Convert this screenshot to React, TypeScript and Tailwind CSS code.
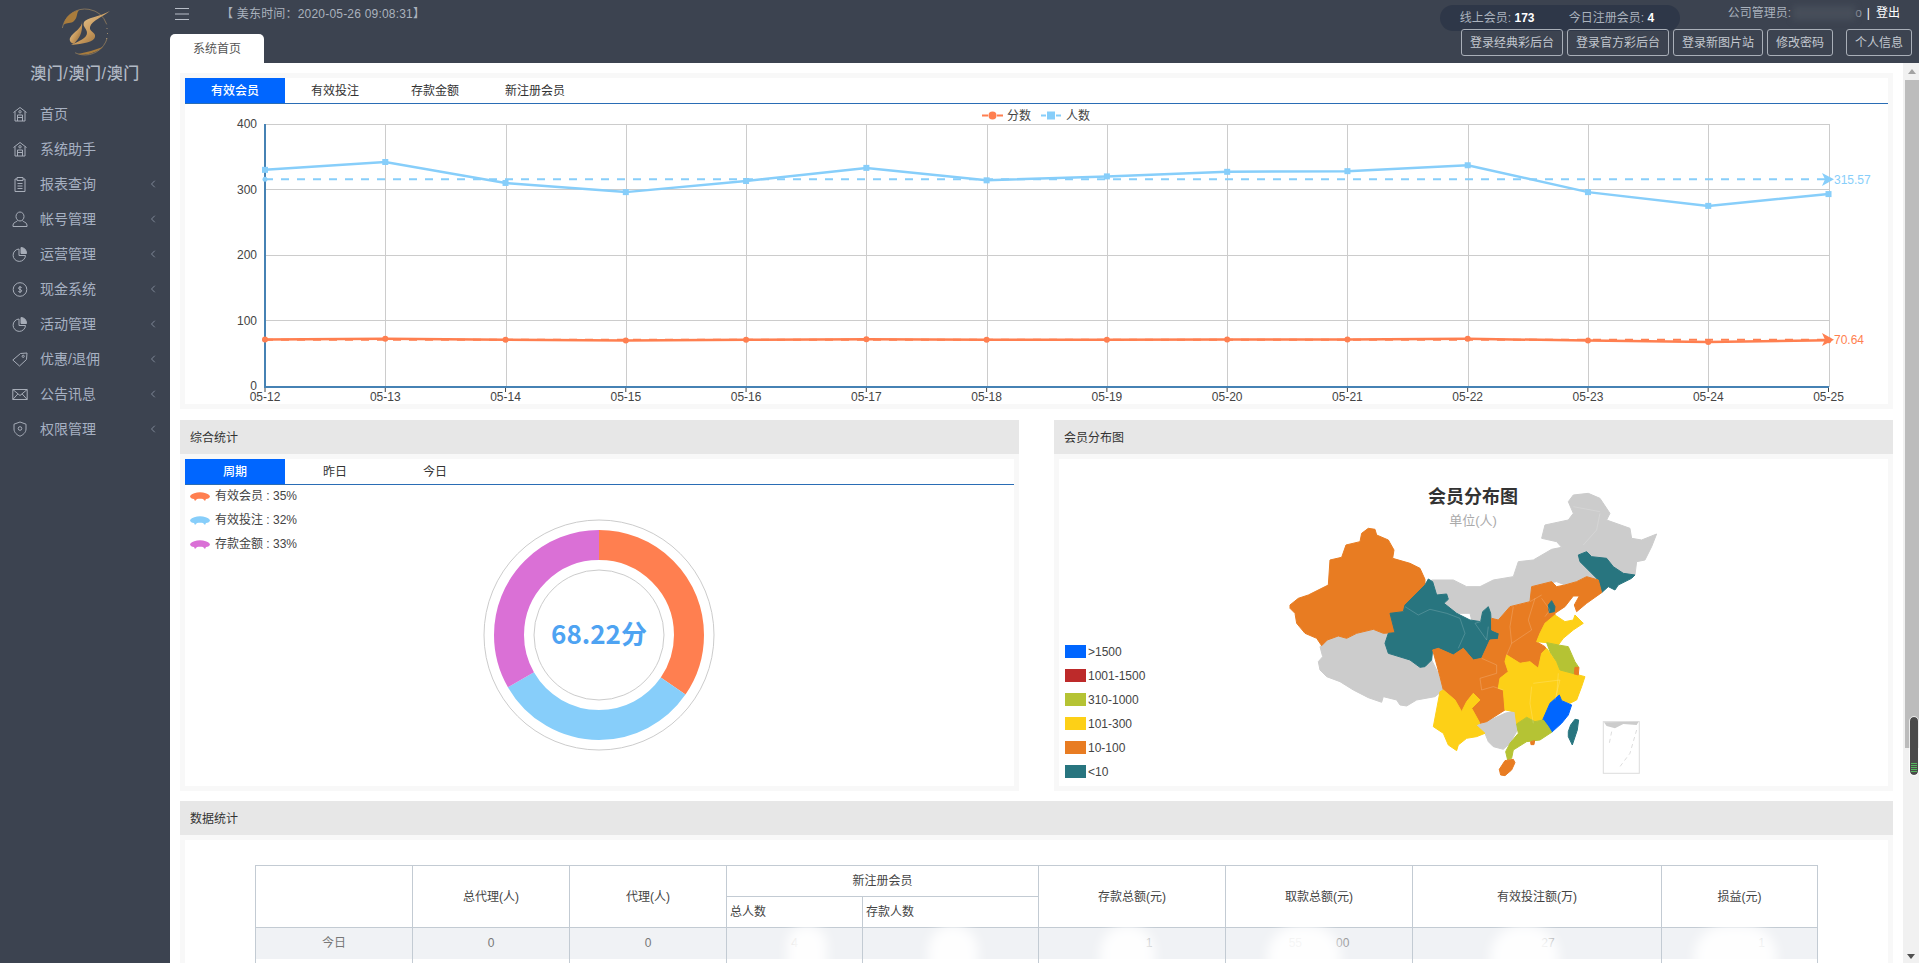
import React from 'react';
import { ChevronLeft } from 'lucide-react';

const navIcons: Record<string, React.ReactNode> = {
  home: (
    <>
      <path d="M1.5 6.5 8 1.5l6.5 5M3 5.5V15h10V5.500" />
      <circle cx="8" cy="5.800" r="1.200" />
      <path d="M5.500 15V9h5v6M5.500 11.500h5" />
    </>
  ),
  report: (
    <>
      <path d="M5 3H3v12.500h10V3h-2" />
      <path d="M5 1.500h6v3H5zM5.500 7.500h5M5.500 10h5M5.500 12.500h5" />
    </>
  ),
  user: (
    <>
      <ellipse cx="8" cy="5.500" rx="4" ry="4.500" />
      <path d="M5.500 9.500C5.500 11 1 11 1 14v1.500h14V14c0-3-4.500-3-4.500-4.500" />
    </>
  ),
  pie: (
    <>
      <path d="M7 3a6.200 6.200 0 1 0 6.500 6.500H7z" />
      <path d="M9 1.500a5.500 5.500 0 0 1 5.500 6H9z" fill="#a7adb8" />
    </>
  ),
  cash: (
    <>
      <circle cx="8" cy="8.500" r="6.800" />
      <path d="M9.700 6.600C9.200 5.800 6.500 5.600 6.500 7.200c0 1.600 3.200 1 3.200 2.600 0 1.600-2.800 1.400-3.400.6M8 5v7" />
    </>
  ),
  tag: (
    <>
      <path d="M.8 9 8.500 2.500l6.500-.5-.5 6.500L7.500 15z" />
      <circle cx="11.200" cy="5.300" r="1.100" />
    </>
  ),
  mail: <path d="M.8 3.500h14.400v10H.8zM.8 3.500 8 9.500l7.200-6M.8 13.500l5-5.500M15.200 13.500l-5-5.500" />,
  shield: (
    <>
      <path d="M8 1 14 3.200V8c0 3.500-3 6-6 7.200C5 14 2 11.500 2 8V3.200z" />
      <circle cx="8" cy="7.500" r="1.800" />
    </>
  ),
};

const navItems = [
  { label: '首页', icon: 'home' },
  { label: '系统助手', icon: 'home' },
  { label: '报表查询', icon: 'report', arrow: true },
  { label: '帐号管理', icon: 'user', arrow: true },
  { label: '运营管理', icon: 'pie', arrow: true },
  { label: '现金系统', icon: 'cash', arrow: true },
  { label: '活动管理', icon: 'pie', arrow: true },
  { label: '优惠/退佣', icon: 'tag', arrow: true },
  { label: '公告讯息', icon: 'mail', arrow: true },
  { label: '权限管理', icon: 'shield', arrow: true },
];

const Logo = () => (
  <svg viewBox="60 5 60 54" className="w-[60px] h-[54px]">
    <defs>
      <linearGradient id="gold" x1="0" y1="0" x2="1" y2="1">
        <stop offset="0" stopColor="#f0d6a8" />
        <stop offset="0.55" stopColor="#c99a5c" />
        <stop offset="1" stopColor="#7c5a30" />
      </linearGradient>
    </defs>
    <circle cx="90" cy="32" r="23" fill="none" stroke="#8d7a5c" strokeWidth="0.8" strokeDasharray="60 14 40 30" transform="rotate(-170 90 32)" />
    <path d="M68.500 25C70 17 76 12 84 10c-3 4-1 7-5 11-3 3-7 1-10.500 4z" fill="#a97c3c" />
    <path d="M115 11c-7 6-18 9-20 16-1 5 6 5 5 10-1 5-12 7-24 8 8-4 16-7 16-12 0-5-5-6-3-11 2-4 15-5 26-11z" fill="url(#gold)" />
    <path d="M87 21c1 7-9 11-12 17-1 3 1 5 4 6 5-6 9-10 8-23z" fill="url(#gold)" />
    <path d="M83 54c9 2 19-2 25-7-8 3-16 5-25 7z" fill="#a97c3c" />
    <path d="M112 28v1M112.500 33v1M111.500 38v1" stroke="#9a8a70" strokeWidth="1" />
  </svg>
);

const Sidebar = () => (
  <aside className="w-[170px] shrink-0 bg-[#3c4350] text-[#a7b1c2]">
    <div className="flex flex-col items-center pt-[5px] h-[96px]">
      <Logo />
      <div className="mt-[3px] text-base leading-6 font-medium tracking-[0.6px] text-[#b1b9c5]">澳门/澳门/澳门</div>
    </div>
    <nav>
      {navItems.map((item) => (
        <div key={item.label} className="flex items-center h-[35px] pl-[12px] pr-[11px] text-sm">
          <svg viewBox="0 0 16 16" fill="none" stroke="#a7adb8" strokeWidth="1" className="w-4 h-4">
            {navIcons[item.icon]}
          </svg>
          <span className="ml-3 flex-1">{item.label}</span>
          {item.arrow && <ChevronLeft className="w-[12px] h-[12px]" strokeWidth={1.25} />}
        </div>
      ))}
    </nav>
  </aside>
);

const Header = () => (
  <header className="h-[63px] shrink-0 flex justify-between bg-[#3c4350]">
    <div className="flex flex-col">
      <div className="h-[34px] flex items-start pt-[8px] pl-[5px]">
        <svg viewBox="0 0 14 12" stroke="#b8bec8" strokeWidth="1" className="w-[14px] h-[12px]">
          <path d="M0 .5h14M0 6h14M0 11.500h14" />
        </svg>
        <span className="ml-[32px] -mt-[1px] text-xs leading-[15px] tracking-[0.2px] text-[#aab2bd]">【 美东时间：2020-05-26 09:08:31】</span>
      </div>
      <div className="w-[94px] h-[29px] bg-white rounded-t-[5px] flex items-center justify-center text-xs text-[#555]">系统首页</div>
    </div>
    <div className="flex flex-col items-end pr-[7px]">
      <div className="h-[29px] flex pr-[12px] text-xs text-[#aab2bd]">
        <div className="mt-[5px] h-[26px] w-[240px] rounded-full bg-[#2e3748] flex items-center pl-[20px]">
          <span className="w-[109px]">线上会员: <b className="text-white font-semibold">173</b></span>
          <span>今日注册会员: <b className="text-white font-semibold">4</b></span>
        </div>
        <div className="ml-[48px] mt-[5px] h-[16px] flex items-center leading-[16px]">
          <span>公司管理员:</span>
          <span className="w-[62px] h-[14px] ml-[2px] bg-[#474e5a] blur-[3px]" />
          <span className="text-[#8f97a3]">o</span>
          <span className="ml-[5px] text-white">|</span>
          <span className="ml-[6px] text-white">登出</span>
        </div>
      </div>
      <div className="h-[27px] flex text-xs text-[#c3c8cf]">
        {['登录经典彩后台', '登录官方彩后台'].map((b) => (
          <div key={b} className="w-[102px] mr-[4px] border border-[#a9afb8] rounded-[3px] flex items-center justify-center">{b}</div>
        ))}
        <div className="w-[90px] mr-[4px] border border-[#a9afb8] rounded-[3px] flex items-center justify-center">登录新图片站</div>
        <div className="w-[66px] mr-[13px] border border-[#a9afb8] rounded-[3px] flex items-center justify-center">修改密码</div>
        <div className="w-[66px] border border-[#a9afb8] rounded-[3px] flex items-center justify-center">个人信息</div>
      </div>
    </div>
  </header>
);

const Tabs = ({ items }: { items: string[] }) => (
  <div className="flex h-[26px] border-b border-[#2a6db5] text-xs text-[#333]">
    {items.map((t, i) => (
      <div
        key={t}
        className={i === 0 ? 'w-[100px] h-[25px] flex items-center justify-center bg-[#0066ff] text-white font-medium' : 'w-[100px] h-[25px] flex items-center justify-center'}
      >
        {t}
      </div>
    ))}
  </div>
);

const members = [330, 342, 310, 296, 313, 333, 314, 320, 327, 328, 337, 296, 275, 293];
const scores = [71, 72, 70.5, 69.5, 70.5, 71.5, 70.5, 70.5, 71, 71, 72, 69.5, 67, 70];
const dates = ['05-12', '05-13', '05-14', '05-15', '05-16', '05-17', '05-18', '05-19', '05-20', '05-21', '05-22', '05-23', '05-24', '05-25'];
const px = (i: number) => 265 + i * 120.27;
const py = (v: number) => 386 - v * 0.655;
const toLine = (vals: number[]) => vals.map((v, i) => `${px(i)},${py(v)}`).join(' ');

const LineChart = () => (
  <svg viewBox="185 104 1703 299" className="block w-[1703px] h-[299px] overflow-visible">
    <g stroke="#cccccc" strokeWidth="1">
      {dates.map((d, i) => i > 0 && <line key={d} x1={Math.round(px(i)) + 0.5} x2={Math.round(px(i)) + 0.5} y1="124" y2="387" />)}
      {[100, 200, 300, 400].map((v) => <line key={v} x1="265" x2="1829" y1={Math.floor(py(v)) + 0.5} y2={Math.floor(py(v)) + 0.5} />)}
    </g>
    <line x1="265" x2="265" y1="124" y2="388" stroke="#4682b4" strokeWidth="2" />
    <line x1="264" x2="1829" y1="387" y2="387" stroke="#4682b4" strokeWidth="2" />
    <g fill="#444" fontSize="12">
      {[0, 100, 200, 300, 400].map((v) => <text key={v} x="257" y={py(v) + 4} textAnchor="end">{v}</text>)}
      {dates.map((d, i) => (
        <g key={d}>
          <line x1={px(i)} x2={px(i)} y1="388" y2="392" stroke="#444" />
          <text x={px(i)} y="401" textAnchor="middle">{d}</text>
        </g>
      ))}
    </g>
    <line x1="265" x2="1826" y1={py(315.57)} y2={py(315.57)} stroke="#87cefa" strokeWidth="2" strokeDasharray="8 8" />
    <line x1="265" x2="1826" y1={py(70.64)} y2={py(70.64)} stroke="#ff7f50" strokeWidth="2" strokeDasharray="8 8" />
    <circle cx="265" cy={py(315.57)} r="2.500" fill="#87cefa" />
    <circle cx="265" cy={py(70.64)} r="2.500" fill="#ff7f50" />
    <polyline points={toLine(members)} fill="none" stroke="#87cefa" strokeWidth="2.500" />
    <polyline points={toLine(scores)} fill="none" stroke="#ff7f50" strokeWidth="2.500" />
    {members.map((v, i) => <rect key={i} x={px(i) - 3} y={py(v) - 3} width="6" height="6" fill="#87cefa" />)}
    {scores.map((v, i) => <circle key={i} cx={px(i)} cy={py(v)} r="3" fill="#ff7f50" />)}
    <polygon points="1822,173 1834,179.300 1822,186 1825,179.300" fill="#87cefa" />
    <polygon points="1822,333 1834,339.700 1822,346 1825,339.700" fill="#ff7f50" />
    <text x="1834" y="183.500" fontSize="12" fill="#87cefa">315.57</text>
    <text x="1834" y="344" fontSize="12" fill="#ff7f50">70.64</text>
    <g fontSize="12" fill="#444">
      <path d="M982 115.500h6M997 115.500h6" stroke="#ff7f50" strokeWidth="2" />
      <circle cx="992.500" cy="115.500" r="4" fill="#ff7f50" />
      <text x="1007" y="119.500">分数</text>
      <path d="M1041 115.500h5M1056 115.500h5" stroke="#87cefa" strokeWidth="2" />
      <rect x="1047" y="111.500" width="8" height="8" fill="#87cefa" />
      <text x="1066" y="119.500">人数</text>
    </g>
  </svg>
);

const fan = 'M0 5C4 0 16 0 20 5C20 7 18 8 16 8L15 10L13 8C11 7.500 9 7.500 7 8L5 10L4 8C2 8 0 7 0 5Z';
const donut = [
  { label: '有效会员 : 35%', color: '#ff7f50', from: 0, size: 34.6 },
  { label: '有效投注 : 32%', color: '#87cefa', from: 34.6, size: 32.1 },
  { label: '存款金额 : 33%', color: '#da70d6', from: 66.7, size: 33.3 },
];

const DonutChart = () => (
  <svg viewBox="185 485 829 301" className="block w-[829px] h-[301px]">
    {donut.map((d, i) => (
      <g key={d.label}>
        <path d={fan} fill={d.color} transform={`translate(190 ${491 + i * 24})`} />
        <text x="215" y={500 + i * 24} fontSize="12" fill="#444">{d.label}</text>
        <circle
          cx="599"
          cy="635"
          r="90"
          fill="none"
          stroke={d.color}
          strokeWidth="30"
          pathLength="100"
          strokeDasharray={`${d.size} ${100 - d.size}`}
          strokeDashoffset={-d.from}
          transform="rotate(-90 599 635)"
        />
      </g>
    ))}
    <circle cx="599" cy="635" r="115" fill="none" stroke="#cccccc" />
    <circle cx="599" cy="635" r="65" fill="none" stroke="#cccccc" />
    <text x="599" y="644" fontSize="26" fontWeight="700" fill="#4ea3f2" textAnchor="middle" className="font-['Noto_Sans_CJK_SC',sans-serif]">68.22分</text>
  </svg>
);

const ORANGE = '#e87c22';
const TEAL = '#28757f';
const YELLOW = '#fdd017';
const GREEN = '#b5c334';
const GRAY = '#cccccc';
const BLUE = '#0066ff';

const regions: { fill: string; points: string }[] = [
  { fill: GRAY, points: '575,330 640,330 680,350 720,350 760,330 820,320 835,275 880,270 935,238 965,232 950,215 905,205 915,165 985,150 1000,130 985,95 1000,75 1045,70 1080,85 1110,130 1100,150 1170,175 1175,205 1205,210 1250,192 1235,230 1215,270 1190,275 1185,315 1085,345 1040,320 1010,335 975,345 950,335 875,350 870,395 810,410 775,450 755,445 745,410 728,425 722,455 695,450 690,430 650,430 612,400 625,388 620,372 590,375' },
  { fill: GRAY, points: '240,530 262,510 295,498 320,505 350,490 400,478 430,490 445,490 435,520 445,550 510,570 540,592 555,590 575,570 600,620 610,660 585,680 530,690 500,708 480,705 470,690 430,680 425,697 385,683 340,660 300,635 260,620 240,600 235,575 248,560' },
  { fill: GRAY, points: '708,765 740,755 795,730 825,722 838,770 810,820 790,838 760,830 745,815 735,790' },
  { fill: ORANGE, points: '150,405 175,385 205,375 265,345 270,270 305,262 318,225 360,215 365,190 385,175 405,178 410,195 445,210 462,240 458,265 510,280 540,295 555,328 555,345 495,405 490,425 450,430 465,488 430,490 400,478 350,490 320,505 295,498 262,510 245,527 230,505 195,490 170,460 165,430 150,415' },
  { fill: TEAL, points: '555,345 565,327 578,335 590,375 620,372 625,388 612,400 650,430 690,450 722,455 728,425 745,410 752,430 755,480 778,490 775,508 750,510 725,565 700,570 670,535 640,555 595,535 578,540 575,570 555,590 540,592 510,570 445,550 435,520 445,490 465,488 450,430 490,425 495,405' },
  { fill: TEAL, points: '1015,255 1040,245 1055,260 1100,265 1120,290 1150,310 1185,315 1175,325 1135,345 1125,360 1105,350 1085,368 1075,330 1040,295 1020,275' },
  { fill: ORANGE, points: '875,350 935,335 950,350 975,345 1010,335 1040,320 1075,330 1085,368 1040,400 1010,425 1003,405 1018,378 1000,378 975,410 945,430 945,440 915,460 900,490 890,515 915,530 920,540 905,550 895,595 870,575 840,580 800,555 795,575 805,605 780,625 775,655 790,660 795,720 740,755 720,760 695,715 720,690 700,670 680,695 665,725 645,690 610,660 600,620 578,540 595,535 640,555 670,535 700,570 725,565 750,510 775,508 778,490 755,480 755,445 775,450 810,410 870,395' },
  { fill: TEAL, points: '925,405 935,392 945,410 943,425 928,428' },
  { fill: YELLOW, points: '600,665 610,660 645,690 665,725 680,695 700,670 720,690 695,715 720,760 708,765 735,790 710,800 680,805 655,825 650,842 625,825 610,790 580,770' },
  { fill: YELLOW, points: '900,490 915,460 945,435 975,455 1000,450 1005,435 1030,460 1000,480 970,505 955,525 920,518 890,515' },
  { fill: YELLOW, points: '800,555 840,580 870,575 895,595 905,550 920,535 950,575 960,600 1005,612 1035,620 1025,650 1010,690 990,700 960,690 935,695 910,750 885,755 860,742 830,762 825,725 795,720 790,660 775,655 780,625 805,605 795,575' },
  { fill: GREEN, points: '920,518 955,525 985,530 1005,575 1015,590 1005,612 960,600 950,575 930,545' },
  { fill: ORANGE, points: '1005,592 1017,592 1015,615 1003,612' },
  { fill: BLUE, points: '958,675 965,692 995,705 985,735 965,760 935,787 925,770 908,750 930,700' },
  { fill: TEAL, points: '1005,748 1016,750 1012,780 997,825 985,800 985,785 992,765' },
  { fill: GREEN, points: '860,742 885,755 910,750 925,770 935,787 900,810 860,815 820,840 815,865 803,870 797,845 810,820 835,790 830,762' },
  { fill: ORANGE, points: '795,872 820,868 825,878 815,900 795,917 782,915 778,898' },
  { fill: ORANGE, points: '872,815 884,812 882,824 873,824' },
];

const borders = [
  'M495 410 535 435 570 418 620 430 660 445 675 490 655 535',
  'M722 455 705 460 740 510M745 470 740 510',
  'M820 410 810 470 815 520 800 555',
  'M885 385 865 450 875 480 815 520',
  'M905 385 930 420 915 440M870 395 905 375',
  'M725 565 770 585 770 610 720 625 725 660 760 650 790 660',
  'M875 650 870 700 880 760M955 610 950 680M880 640 960 630 945 690',
  'M1080 130 1070 180 1030 225',
  'M1000 110 1080 125',
];

const legend = [
  { label: '>1500', color: BLUE },
  { label: '1001-1500', color: '#bd2a2a' },
  { label: '310-1000', color: GREEN },
  { label: '101-300', color: YELLOW },
  { label: '10-100', color: ORANGE },
  { label: '<10', color: TEAL },
];

const MapChart = () => (
  <svg viewBox="1059 459 829 327" className="block w-[829px] h-[327px]">
    <text x="1473" y="503" fontSize="18" fontWeight="700" fill="#333" textAnchor="middle">会员分布图</text>
    <text x="1473" y="525" fontSize="13" fill="#aaa" textAnchor="middle">单位(人)</text>
    <g transform="translate(1240 470) scale(0.3333)">
      {regions.map((r, i) => <polygon key={i} points={r.points} fill={r.fill} stroke={r.fill} strokeWidth="3" strokeLinejoin="round" />)}
      {borders.map((d, i) => <path key={i} d={d} fill="none" stroke="#ffffff" strokeOpacity="0.35" strokeWidth="1.500" />)}
      <rect x="1090" y="755" width="108" height="155" fill="none" stroke="#dcdcdc" strokeWidth="3" />
      <polygon points="1092,757 1196,755 1190,765 1150,762 1125,775 1100,768" fill={GRAY} />
      <path d="M1115 785 1108 820M1190 780 1170 850 1140 890" fill="none" stroke="#dddddd" strokeWidth="3" strokeDasharray="12 10" />
    </g>
    {legend.map((l, i) => (
      <g key={l.label}>
        <rect x="1065" y={645 + i * 24} width="21" height="13" fill={l.color} />
        <text x="1088" y={656 + i * 24} fontSize="12" fill="#444">{l.label}</text>
      </g>
    ))}
  </svg>
);

const PanelHeader = ({ title }: { title: string }) => (
  <div className="h-[34px] bg-[#e7e7e7] flex items-center pl-[10px] pt-[1px] text-xs text-[#333]">{title}</div>
);

const cellBorder = 'border border-[#c3cbd3] font-normal';
const rowCell = 'border-x border-t border-[#c3cbd3] font-normal';

const blobs = [
  { left: 'left-[532px]', width: 'w-[40px]' },
  { left: 'left-[673px]', width: 'w-[50px]' },
  { left: 'left-[845px]', width: 'w-[55px]' },
  { left: 'left-[1012px]', width: 'w-[74px]' },
  { left: 'left-[1235px]', width: 'w-[69px]' },
  { left: 'left-[1439px]', width: 'w-[83px]' },
];

const StatsTable = () => (
  <div className="relative">
    <table className="w-[1562px] table-fixed border-collapse text-xs text-[#444]">
      <colgroup>
        <col className="w-[157px]" />
        <col className="w-[157px]" />
        <col className="w-[157px]" />
        <col className="w-[136px]" />
        <col className="w-[176px]" />
        <col className="w-[187px]" />
        <col className="w-[187px]" />
        <col className="w-[249px]" />
        <col className="w-[156px]" />
      </colgroup>
      <thead>
        <tr className="h-[31px] text-center">
          <th rowSpan={2} className={cellBorder} />
          <th rowSpan={2} className={cellBorder}>总代理(人)</th>
          <th rowSpan={2} className={cellBorder}>代理(人)</th>
          <th colSpan={2} className={cellBorder}>新注册会员</th>
          <th rowSpan={2} className={cellBorder}>存款总额(元)</th>
          <th rowSpan={2} className={cellBorder}>取款总额(元)</th>
          <th rowSpan={2} className={cellBorder}>有效投注额(万)</th>
          <th rowSpan={2} className={cellBorder}>损益(元)</th>
        </tr>
        <tr className="h-[31px]">
          <th className={`${cellBorder} text-left pl-[3px]`}>总人数</th>
          <th className={`${cellBorder} text-left pl-[3px]`}>存款人数</th>
        </tr>
      </thead>
      <tbody>
        <tr className="h-[31px] text-center bg-[#f0f2f5] text-[#777]">
          <td className={rowCell}>今日</td>
          <td className={rowCell}>0</td>
          <td className={rowCell}>0</td>
          <td className={`${rowCell} text-[#bbb]`}>4</td>
          <td className={rowCell} />
          <td className={`${rowCell} pl-[34px] text-[#999]`}>1</td>
          <td className={`${rowCell} text-[#999]`}>
            <div className="flex justify-center gap-[34px]"><span>55</span><span>00</span></div>
          </td>
          <td className={`${rowCell} pl-[22px] text-[#999]`}>27</td>
          <td className={`${rowCell} pl-[44px] text-[#999]`}>1</td>
        </tr>
        <tr className="h-[31px]">
          {Array.from({ length: 9 }).map((_, i) => <td key={i} className="border-x border-[#c3cbd3]" />)}
        </tr>
      </tbody>
    </table>
    {blobs.map((b) => (
      <div key={b.left} className={`absolute top-[60px] h-[64px] ${b.left} ${b.width} rounded-full bg-white/90 blur-[6px]`} />
    ))}
  </div>
);

const Scrollbar = () => (
  <div className="relative w-4 shrink-0 bg-[#f1f1f1] flex flex-col items-end">
    <div className="h-[17px] w-[14px] flex items-center justify-center">
      <div className="w-0 h-0 border-x-[4px] border-x-transparent border-b-[5px] border-b-[#a3a3a3]" />
    </div>
    <div className="h-[668px] w-[14px] bg-[#bcbcbc]" />
    <div className="absolute left-[7px] top-[654px] w-[8px] h-[58px] rounded-full bg-[#4a4a4a] outline outline-1 outline-white/70 flex flex-col justify-end gap-px pb-[3px] px-px">
      {[0, 1, 2, 3, 4].map((n) => <div key={n} className="h-px bg-[#55b85f]" />)}
    </div>
    <div className="absolute left-[4px] bottom-[4px] w-0 h-0 border-x-[4px] border-x-transparent border-t-[5px] border-t-[#505050]" />
  </div>
);

const App = () => (
  <div className="h-screen overflow-hidden flex bg-white font-['Liberation_Sans','Noto_Sans_CJK_SC',sans-serif]">
    <Sidebar />
    <div className="flex-1 min-w-0 flex flex-col">
      <Header />
      <div className="flex-1 min-h-0 flex">
        <main className="flex-1 min-w-0 overflow-hidden px-[10px] pt-[10px]">
          <section className="h-[336px] p-[5px] bg-[#f8f8f8]">
            <div className="bg-white h-[326px]">
              <Tabs items={['有效会员', '有效投注', '存款金额', '新注册会员']} />
              <LineChart />
            </div>
          </section>
          <div className="grid grid-cols-2 gap-[35px] mt-[11px]">
            <section>
              <PanelHeader title="综合统计" />
              <div className="p-[5px] bg-[#f8f8f8]">
                <div className="bg-white h-[327px]">
                  <Tabs items={['周期', '昨日', '今日']} />
                  <DonutChart />
                </div>
              </div>
            </section>
            <section>
              <PanelHeader title="会员分布图" />
              <div className="p-[5px] bg-[#f8f8f8]">
                <div className="bg-white h-[327px]">
                  <MapChart />
                </div>
              </div>
            </section>
          </div>
          <section className="mt-[10px]">
            <PanelHeader title="数据统计" />
            <div className="p-[5px] bg-[#f8f8f8]">
              <div className="bg-white px-[70px] pt-[25px] pb-[30px]">
                <StatsTable />
              </div>
            </div>
          </section>
        </main>
        <Scrollbar />
      </div>
    </div>
  </div>
);

export default App;
